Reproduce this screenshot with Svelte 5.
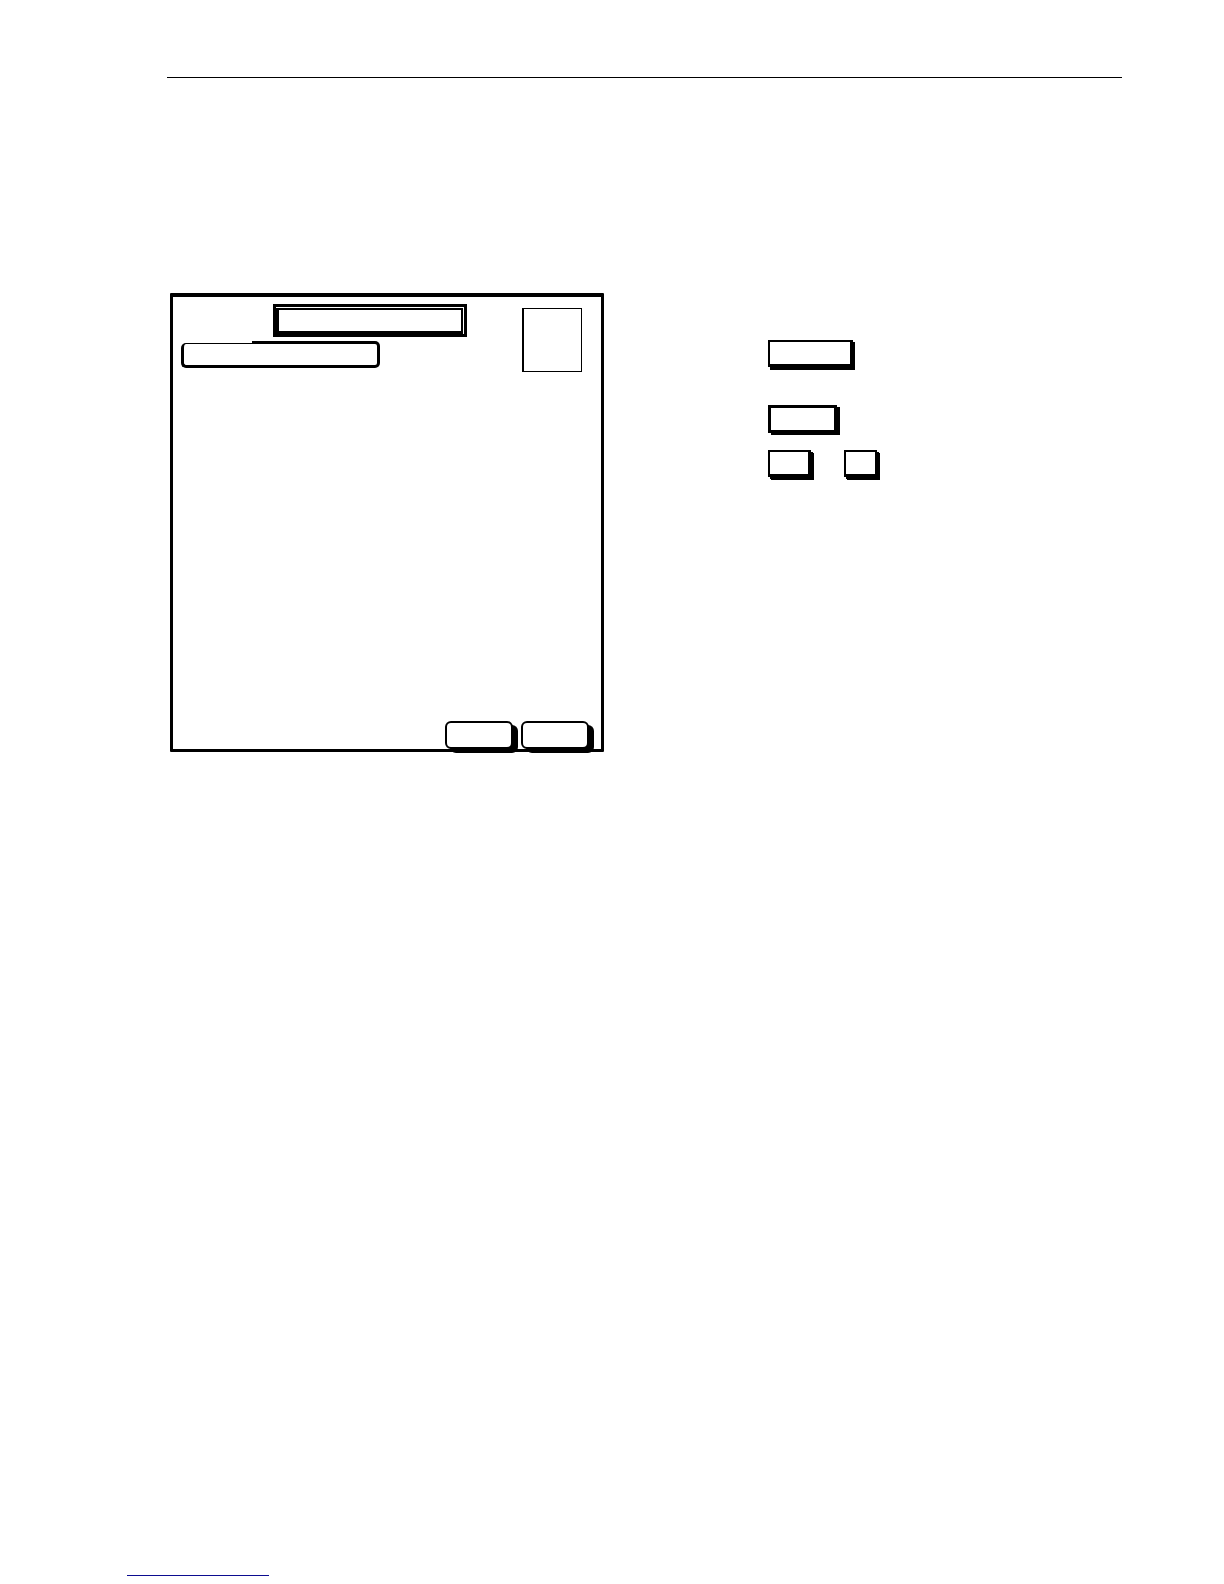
<script>
  const keys = [
    { row: 'first', items: [{ label: 'Wide key', kind: 'wide' }] },
    { row: 'second', items: [{ label: 'Medium key', kind: 'medium' }] },
    { row: 'third', items: [{ label: 'Short key', kind: 'short' }, { label: 'Small key', kind: 'small' }] }
  ];
</script>

<div class="page">
  <header></header>

  <main>
    <section class="panel">
      <div class="top">
        <div class="fields">
          <div class="title"><div class="title-inner"></div></div>
          <div class="entry">
            <span class="entry-start"></span>
            <span class="entry-rest"></span>
          </div>
        </div>
        <div class="picture-box"></div>
      </div>
      <div class="actions">
        <button type="button" aria-label="Left action"></button>
        <button type="button" aria-label="Right action"></button>
      </div>
    </section>

    <section class="keys">
      {#each keys as group (group.row)}
        <div class="key-row {group.row}">
          {#each group.items as item (item.label)}
            <button type="button" class="key {item.kind}" aria-label={item.label}></button>
          {/each}
        </div>
      {/each}
    </section>
  </main>

  <footer><a href="#top" aria-label="Back to top"></a></footer>
</div>

<style>
  :global(body) {
    margin: 0;
    background: #fff;
  }

  .page,
  .page * {
    box-sizing: border-box;
  }

  .page {
    display: flex;
    flex-direction: column;
    min-height: 100vh;
    padding: 77px 102px 8px 127px;
    font-family: "Liberation Sans", Arial, sans-serif;
  }

  header {
    margin-left: 40px;
    border-top: 1px solid #000;
  }

  main {
    display: grid;
    grid-template-columns: 434fr 354fr;
    column-gap: 164px;
    margin: 215px 0 32px 43px;
  }

  .panel {
    display: flex;
    flex-direction: column;
    min-height: 459px;
    border: 3px solid #000;
    border-top-width: 4px;
    border-radius: 1px;
  }

  .top {
    display: flex;
    justify-content: space-between;
    padding: 7px 19px 0 8px;
  }

  .fields {
    display: flex;
    flex-direction: column;
    gap: 4px;
  }

  .title {
    width: 194px;
    height: 33px;
    margin-left: 92px;
    padding: 1px 1px 0 0;
    border: 3px solid #000;
  }

  .title-inner {
    height: 100%;
    border: solid #000;
    border-width: 2px 2px 3px 3px;
  }

  .entry {
    display: flex;
    align-items: flex-end;
    width: 199px;
  }

  .entry-start {
    width: 71px;
    height: 25px;
    border: solid #000;
    border-width: 1px 0 3px 3px;
    border-radius: 5px 0 0 5px;
  }

  .entry-rest {
    flex: 1;
    height: 27px;
    border: 3px solid #000;
    border-left: 0;
    border-radius: 0 5px 5px 0;
  }

  .picture-box {
    width: 60px;
    height: 64px;
    margin-top: 4px;
    border: 1px solid #000;
    border-left-width: 2px;
  }

  button {
    padding: 0;
    border: 2px solid #000;
    background: #fff;
  }

  .actions {
    display: flex;
    justify-content: flex-end;
    gap: 8px;
    margin-top: auto;
    padding-right: 12px;
  }

  .actions button {
    width: 68px;
    height: 28px;
    border-radius: 6px;
    box-shadow: 5px 4px 0 #000;
  }

  .keys {
    padding-top: 47px;
  }

  .key-row {
    display: flex;
    gap: 33px;
  }

  .second {
    margin-top: 38px;
  }

  .third {
    margin-top: 17px;
  }

  .key {
    height: 27px;
    border-width: 2px 3px 3px 2px;
    box-shadow: 2px 2px 0 #000, 3px 3px 0 #000;
  }

  .wide {
    width: 85px;
    box-shadow: 2px 2px 0 #000, 2px 3px 0 #000;
  }

  .medium {
    width: 69px;
    height: 28px;
    border-width: 3px;
    box-shadow: 3px 2px 0 #000;
  }

  .short {
    width: 43px;
  }

  .small {
    width: 33px;
    border-right-width: 2px;
  }

  footer {
    margin-top: auto;
  }

  footer a {
    display: block;
    width: 142px;
    border-bottom: 1px solid #0c0c90;
  }
</style>
